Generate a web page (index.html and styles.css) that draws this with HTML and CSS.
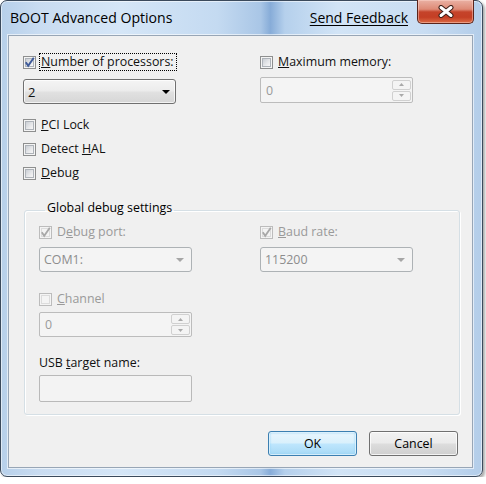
FILE: index.html
```html
<!DOCTYPE html>
<html>
<head>
<meta charset="utf-8">
<title>BOOT Advanced Options</title>
<link rel="stylesheet" href="styles.css">
</head>
<body>
<div class="window">
  <div class="titlebar">
    <span class="title">BOOT Advanced Options</span>
    <a class="feedback">Send Feedback</a>
    <span class="close">
      <svg width="16" height="13" viewBox="0 0 16 13">
        <path d="M3 2.5 L13 10.5 M13 2.5 L3 10.5" stroke="#3b1d17" stroke-width="5" stroke-linecap="round" fill="none"/>
        <path d="M3 2.5 L13 10.5 M13 2.5 L3 10.5" stroke="#ffffff" stroke-width="3" stroke-linecap="round" fill="none"/>
      </svg>
    </span>
  </div>
  <div class="panel">
    <div class="top">
      <div class="col">
        <div class="chk">
          <span class="box"><span class="inner"></span><svg class="mark" width="13" height="13" viewBox="0 0 13 13"><path d="M2.8 6.3 L5.2 9.8 L10.8 1.8" stroke="#3f5b9a" stroke-width="2" fill="none"/></svg></span>
          <span class="lbl focus"><u>N</u>umber of processors:</span>
        </div>
        <div class="combo">
          <span>2</span>
          <svg width="8" height="4" viewBox="0 0 8 4"><path d="M0 0 H8 L4 4 Z" fill="#000"/></svg>
        </div>
        <div class="opts">
          <div class="chk row"><span class="box"><span class="inner"></span></span><span class="lbl"><u>P</u>CI Lock</span></div>
          <div class="chk row"><span class="box"><span class="inner"></span></span><span class="lbl">Detect <u>H</u>AL</span></div>
          <div class="chk row"><span class="box"><span class="inner"></span></span><span class="lbl"><u>D</u>ebug</span></div>
        </div>
      </div>
      <div class="col">
        <div class="chk">
          <span class="box"><span class="inner"></span></span>
          <span class="lbl"><u>M</u>aximum memory:</span>
        </div>
        <div class="spin">
          <span>0</span>
          <span class="spinbtns">
            <span class="sb"><svg width="5" height="3" viewBox="0 0 5 3"><path d="M0 3 L2.5 0 L5 3 Z" fill="#a9a9a9"/></svg></span>
            <span class="sb"><svg width="5" height="3" viewBox="0 0 5 3"><path d="M0 0 L2.5 3 L5 0 Z" fill="#a9a9a9"/></svg></span>
          </span>
        </div>
      </div>
    </div>

    <fieldset class="group">
      <legend>Global debug settings</legend>
      <div class="ggrid">
        <div class="gcol">
          <div class="chk dis">
            <span class="box"><span class="inner"></span><svg class="mark" width="13" height="13" viewBox="0 0 13 13"><path d="M2.8 6.3 L5.2 9.8 L10.8 1.8" stroke="#a8a8a8" stroke-width="1.8" fill="none"/></svg></span>
            <span class="lbl">D<u>e</u>bug port:</span>
          </div>
          <div class="combo dis">
            <span>COM1:</span>
            <svg width="8" height="4" viewBox="0 0 8 4"><path d="M0 0 H8 L4 4 Z" fill="#a6a6a6"/></svg>
          </div>
          <div class="chk dis gap">
            <span class="box"><span class="inner"></span></span>
            <span class="lbl"><u>C</u>hannel</span>
          </div>
          <div class="spin small">
            <span>0</span>
            <span class="spinbtns">
              <span class="sb"><svg width="5" height="3" viewBox="0 0 5 3"><path d="M0 3 L2.5 0 L5 3 Z" fill="#a9a9a9"/></svg></span>
              <span class="sb"><svg width="5" height="3" viewBox="0 0 5 3"><path d="M0 0 L2.5 3 L5 0 Z" fill="#a9a9a9"/></svg></span>
            </span>
          </div>
          <div class="usblbl">USB <u>t</u>arget name:</div>
          <div class="textbox"></div>
        </div>
        <div class="gcol">
          <div class="chk dis">
            <span class="box"><span class="inner"></span><svg class="mark" width="13" height="13" viewBox="0 0 13 13"><path d="M2.8 6.3 L5.2 9.8 L10.8 1.8" stroke="#a8a8a8" stroke-width="1.8" fill="none"/></svg></span>
            <span class="lbl"><u>B</u>aud rate:</span>
          </div>
          <div class="combo dis">
            <span>115200</span>
            <svg width="8" height="4" viewBox="0 0 8 4"><path d="M0 0 H8 L4 4 Z" fill="#a6a6a6"/></svg>
          </div>
        </div>
      </div>
    </fieldset>

    <div class="buttons">
      <button class="btn default">OK</button>
      <button class="btn">Cancel</button>
    </div>
  </div>
</div>
</body>
</html>
```

FILE: styles.css
```css
html, body {
  margin: 0;
  padding: 0;
  background: #ffffff;
}

body {
  font-family: "Open Sans", "Noto Sans", sans-serif;
  font-size: 12.4px;
  color: #111;
}

.window {
  box-sizing: border-box;
  width: 483px;
  height: 477px;
  border: 1px solid #3b4a5c;
  border-radius: 7px;
  padding: 0 9px 8px 7px;
  display: flex;
  flex-direction: column;
  background:
    linear-gradient(to right,
      #b7d0ea 0%,
      #c9dcf1 8%,
      #d5e6f7 25%,
      #c4daf1 45%,
      #a9c6e6 54%,
      #87acd8 56%,
      #b5d0ec 59%,
      #d2e4f6 70%,
      #c9ddf2 88%,
      #b3cde9 100%);
  box-shadow: 2px 2px 3px rgba(0, 0, 0, 0.35), inset 0 0 0 1px rgba(255, 255, 255, 0.55);
}

.titlebar {
  height: 34px;
  display: flex;
  align-items: flex-start;
  flex: none;
}

.title {
  margin: 7px 0 0 2px;
  font-size: 14.1px;
  line-height: 20px;
  color: #000;
}

.feedback {
  margin: 7px 0 0 auto;
  font-size: 14px;
  line-height: 20px;
  color: #000;
  text-decoration: underline;
  text-underline-offset: 2px;
}

.close {
  box-sizing: border-box;
  width: 57px;
  height: 24px;
  margin: -1px -1px 0 9px;
  border: 1px solid #5b241a;
  border-top: none;
  border-radius: 0 0 5px 5px;
  display: flex;
  align-items: center;
  justify-content: center;
  background: linear-gradient(#eab1a4 0%, #de8a76 40%, #c5432a 52%, #c43f25 75%, #dc6c45 100%);
  box-shadow: inset 0 0 0 1px rgba(255, 220, 210, 0.45);
}

.panel {
  flex: 1;
  border: 1px solid #98a6b6;
  background: #f0f0f0;
  box-shadow: 0 0 0 1px rgba(255, 255, 255, 0.6);
  display: flex;
  flex-direction: column;
}

.top {
  display: grid;
  grid-template-columns: 153px 153px;
  column-gap: 84px;
  padding: 17px 0 0 14px;
}

.col {
  display: flex;
  flex-direction: column;
}

.chk {
  display: flex;
  align-items: center;
  height: 18px;
}

.chk.row {
  height: 24px;
}

.box {
  box-sizing: border-box;
  width: 13px;
  height: 13px;
  border: 1px solid #8e8f8f;
  background: #f4f4f4;
  padding: 1px;
  display: grid;
  flex: none;
}

.box .inner {
  grid-area: 1 / 1;
  border: 1px solid #aeb3b9;
  background: linear-gradient(135deg, #cbcfd5 0%, #e8e9eb 60%, #f7f7f7 100%);
}

.box .mark {
  grid-area: 1 / 1;
  margin: -2px;
}

.lbl {
  margin-left: 5px;
  line-height: 16px;
  white-space: nowrap;
}

.lbl.focus {
  outline: 1px dotted #000;
  outline-offset: 0;
  padding: 0 2px 0 1px;
  margin-left: 4px;
}

.chk.dis .box {
  border-color: #bcbcbc;
}

.chk.dis .box .inner {
  border-color: #dcdcdc;
  background: #f4f4f4;
}

.chk.dis .lbl {
  color: #9a9a9a;
}

.combo {
  box-sizing: border-box;
  height: 25px;
  margin-top: 8px;
  border: 1px solid #707070;
  border-radius: 3px;
  padding: 0 5px 0 4px;
  display: flex;
  align-items: center;
  justify-content: space-between;
  background: linear-gradient(#f4f4f4 0%, #ececec 45%, #e0e0e0 55%, #d6d6d6 100%);
  box-shadow: inset 0 0 0 1px rgba(255, 255, 255, 0.7);
  font-size: 13px;
}

.combo.dis {
  margin-top: 6px;
  border-color: #adb2b5;
  background: #f4f4f4;
  box-shadow: none;
  color: #8d8d8d;
  font-size: 12.4px;
  padding: 0 7px 0 4px;
}

.opts {
  margin-top: 9px;
  display: flex;
  flex-direction: column;
}

.spin {
  box-sizing: border-box;
  height: 26px;
  margin-top: 6px;
  border: 1px solid #bcbcbc;
  border-radius: 2px;
  background: #f4f4f4;
  display: flex;
  align-items: center;
  justify-content: space-between;
  padding: 0 1px 0 5px;
  color: #9a9a9a;
}

.spin.small {
  height: 25px;
  margin-top: 4px;
}

.spinbtns {
  display: flex;
  flex-direction: column;
  gap: 1px;
}

.sb {
  box-sizing: border-box;
  width: 19px;
  height: 10px;
  border: 1px solid #d0d0d0;
  border-radius: 2px;
  background: #f4f4f4;
  display: flex;
  align-items: center;
  justify-content: center;
}

.group {
  margin: 15px 12px 0 15px;
  padding: 3px 0 12px 14px;
  border: 1px solid #d5dfe5;
  border-radius: 3px;
  box-shadow: inset 1px 1px 0 #ffffff, 1px 1px 0 #ffffff;
  min-width: 0;
}

.group legend {
  padding: 0 2px 4px 2px;
  margin-left: 6px;
  line-height: 16px;
  color: #000;
}

.ggrid {
  display: grid;
  grid-template-columns: 153px 153px;
  column-gap: 68px;
}

.gcol {
  display: flex;
  flex-direction: column;
}

.chk.gap {
  margin-top: 18px;
}

.usblbl {
  margin-top: 18px;
  line-height: 16px;
}

.textbox {
  box-sizing: border-box;
  height: 27px;
  margin-top: 4px;
  border: 1px solid #b9b9b9;
  border-radius: 2px;
  background: #f3f3f3;
}

.buttons {
  display: flex;
  justify-content: flex-end;
  gap: 12px;
  margin-top: 16px;
  padding-right: 14px;
}

.btn {
  box-sizing: border-box;
  width: 89px;
  height: 25px;
  border: 1px solid #707070;
  border-radius: 3px;
  background: linear-gradient(#f2f2f2 0%, #ebebeb 48%, #dddddd 52%, #cfcfcf 100%);
  box-shadow: inset 0 0 0 1px rgba(255, 255, 255, 0.75);
  font-family: "Open Sans", "Noto Sans", sans-serif;
  font-size: 12.4px;
  color: #000;
  padding: 0;
}

.btn.default {
  border-color: #3c7fb1;
  background: linear-gradient(#eaf6fd 0%, #d9f0fc 48%, #bee6fd 52%, #a7d9f5 100%);
  box-shadow: inset 0 0 0 1px rgba(255, 255, 255, 0.6), inset 0 0 2px 1px #8fd0f5;
}
```
